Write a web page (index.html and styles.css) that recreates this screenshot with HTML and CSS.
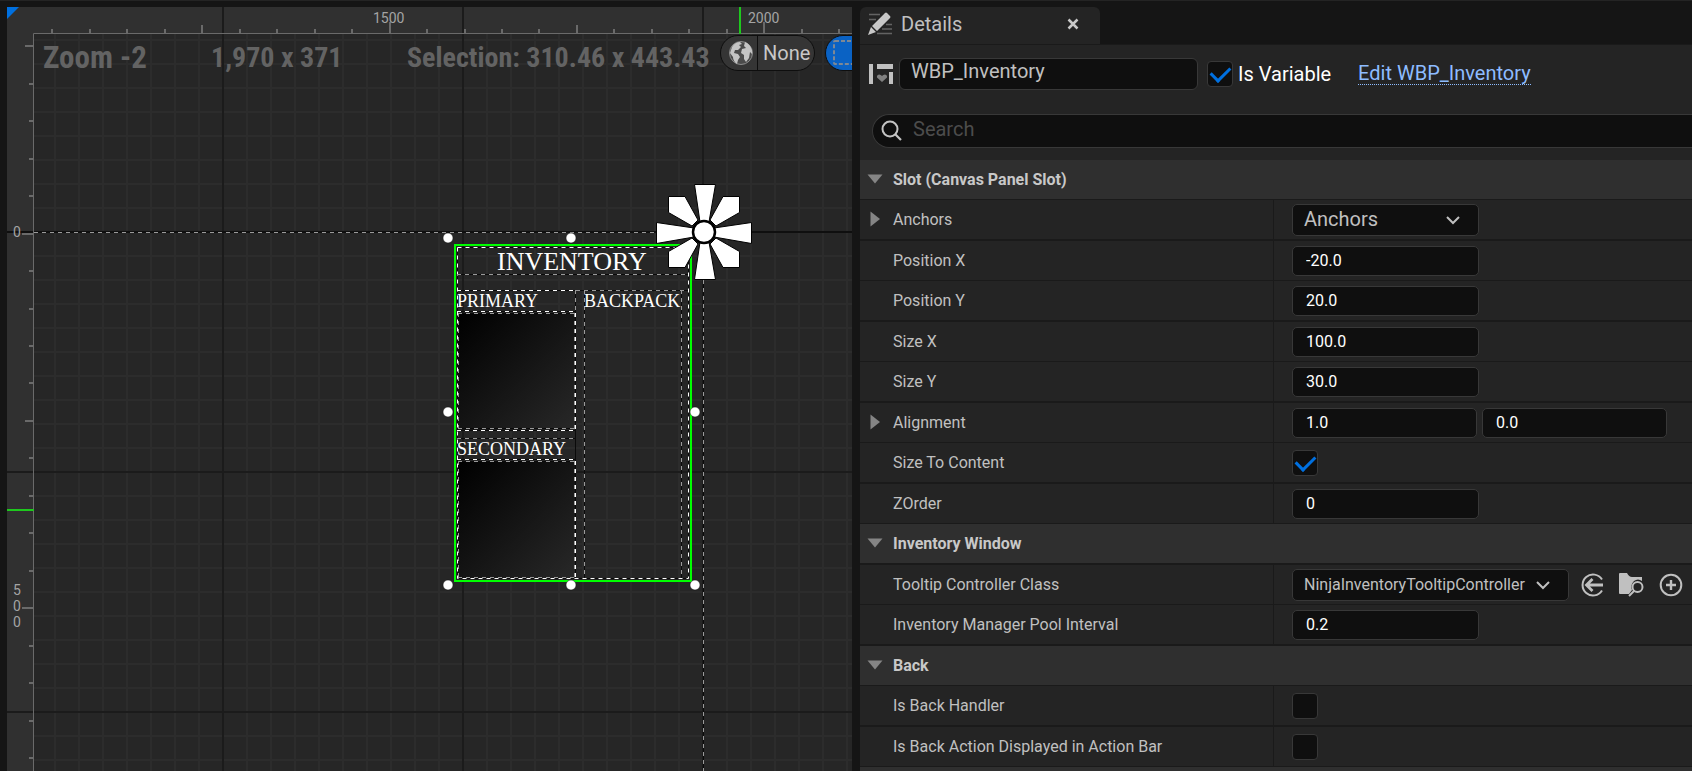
FILE: index.html
```html
<!DOCTYPE html>
<html lang="en">
<head>
<meta charset="utf-8">
<title>Widget Designer</title>
<link rel="stylesheet" href="styles.css">
</head>
<body>
<main class="editor">
  <section class="designer" aria-label="Designer">
    <svg class="scene" aria-hidden="true">
      <defs>
        <pattern id="minor" x="54" y="15" width="24" height="24" patternUnits="userSpaceOnUse">
          <path d="M0 0H24V2H2V24H0Z" fill="#2c2c2c"/>
        </pattern>
        <linearGradient id="slot" x1="0" y1="0" x2="1" y2="1">
          <stop offset="0" stop-color="#000"/><stop offset="1" stop-color="#282828"/>
        </linearGradient>
      </defs>
      <g transform="translate(-7 -7)">
        <rect x="34" y="34" width="4000" height="4000" fill="#262626"/>
        <rect x="34" y="34" width="4000" height="4000" fill="url(#minor)"/>
        <path d="M7 7H4000V33H33V4000H7Z" fill="#303030"/>
        <path d="M7 7H19L7 19Z" fill="#0070e0"/>
        <path d="M223 7V4000M463 7V4000M703 7V4000M7 472H4000M7 712H4000" stroke="#1b1b1b" stroke-width="2"/>
        <path d="M7 232H4000" stroke="#0f0f0f" stroke-width="2"/>
        <path d="M33.500 4000V33.500H4000" fill="none" stroke="#6a6a6a"/>
        <path class="ticks" d="M52 29V33M90 29V33M127 29V33M165 29V33M202 25V33M240 29V33M277 29V33M315 29V33M352 29V33M390 22V33M427 29V33M465 29V33M502 29V33M539 29V33M577 25V33M614 29V33M652 29V33M689 29V33M727 29V33M764 22V33M802 29V33M839 29V33"/>
        <path class="ticks" d="M25 46H33M29 84H33M29 121H33M29 159H33M29 196H33M22 234H33M29 271H33M29 309H33M29 346H33M29 383H33M25 421H33M29 458H33M29 496H33M29 533H33M29 571H33M22 608H33M29 646H33M29 683H33M29 721H33M29 758H33"/>
        <path d="M740 7V34M7 510H34" stroke="#1ec81e" stroke-width="2"/>

        <path class="under" d="M703.500 232V4000"/>
        <path class="dash dim" d="M34 232.500H704M703.500 232V4000"/>

        <rect x="458" y="313" width="117" height="117" fill="url(#slot)"/>
        <rect x="458" y="461" width="117" height="117" fill="url(#slot)"/>
        <path class="under" d="M457.500 247.500H688.500V578.500H457.500ZM457 274.500H688M457 290.500H688M575.500 290V578M584.500 290V578M681.500 290V578M457 311.500H576M458 313.500H575M458 428.500H575M457 430.500H576M457 438.500H575M457 459.500H576M458 461.500H575"/>
        <path class="dash" d="M457.500 247.500H688.500V578.500H457.500ZM457 290.500H576M575.500 313V430M575.500 461V578M457 311.500H576M457 430.500H576M457 459.500H576"/>
        <path class="dash dim" d="M457 274.500H688M576 290.500H688M575.500 290V311M584.500 290V578M681.500 290V578M458 313.500H575M458 428.500H575M457 438.500H575M458 461.500H575M458 577.500H575M458.500 313V430M574.500 313V430M458.500 461V578M574.500 461V578"/>
        <rect x="455" y="245" width="236" height="336" fill="none" stroke="#00ff00" stroke-width="2"/>
        <g fill="#fff" stroke="#111" stroke-opacity=".5">
          <circle cx="448" cy="238" r="5"/><circle cx="571" cy="238" r="5"/>
          <circle cx="448" cy="412" r="5"/><circle cx="695" cy="412" r="5"/>
          <circle cx="448" cy="585" r="5"/><circle cx="571" cy="585" r="5"/><circle cx="695" cy="585" r="5"/>
        </g>
        <g transform="translate(704 232)" fill="#fff" stroke="#000">
          <path d="M-9.500-47.500H11.500L5-10H-4ZM-9.500 47.500H11.500L5 10H-4ZM-47.500-9.500V11.500L-10 5V-4ZM47.500-9.500V11.500L10 5V-4Z"/>
          <path d="M-35.500-35.500H-19L-6-12L-12-6L-35.500-19.500ZM35.500-35.500H19L6-12L12-6L35.500-19.500ZM-35.500 35.500H-19L-6 12L-12 6L-35.500 19.500ZM35.500 35.500H19L6 12L12 6L35.500 19.500Z"/>
          <circle r="11" stroke-width="2.500"/>
        </g>
      </g>
    </svg>
    <span class="mark mark-1500">1500</span>
    <span class="mark mark-2000">2000</span>
    <span class="mark mark-side mark-0">0</span>
    <span class="mark mark-side mark-500">500</span>
    <h2 class="widget-title">INVENTORY</h2>
    <h3 class="widget-label at-primary">PRIMARY</h3>
    <h3 class="widget-label at-backpack">BACKPACK</h3>
    <h3 class="widget-label at-secondary">SECONDARY</h3>

    <div class="hud">
      <span class="hud-zoom">Zoom -2</span>
      <span class="hud-cursor">1,970 x 371</span>
      <span class="hud-selection">Selection: 310.46 x 443.43</span>
      <button class="pill" type="button">
        <svg width="26" height="26" viewBox="0 0 26 26" aria-hidden="true">
          <circle cx="13" cy="13" r="11.500" fill="#4b4b4b" stroke="#8c8c8c"/>
          <path d="M4 7Q7 2 12 2L14 4L11 5L13 7L10 10L7 10L6 13L10 14L12 17L10 20L9 24Q5 21 5 17L2 13ZM17 2Q22 4 24 10L24 14L22 12L21 18L18 22L16 19V15L13 13L14 9L18 8L16 6Z" fill="#c4c4c4"/>
        </svg>
        <span class="pill-text">None</span>
      </button>
      <button class="pill-blue" type="button" aria-label="Show outlines">
        <svg width="26" height="26" viewBox="0 0 26 26" aria-hidden="true"><rect x="1" y="1" width="24" height="23" rx="1" fill="none" stroke="#7e8894" stroke-width="2" stroke-dasharray="4 2"/></svg>
      </button>
    </div>
  </section>

  <section class="details" aria-label="Details">
    <div class="tabs">
      <div class="tab">
        <svg width="24" height="24" viewBox="0 0 24 24" aria-hidden="true">
          <path d="M1 2.500H12M1 7.500H8M18 12.500H24M14 17H24M9 21.500H24" stroke="#636363" stroke-width="1.500"/>
          <path d="M17 1Q18 0 19 1L22 4Q23 5 22 6L9 19L4 14ZM3 15L8 20L0 23Z" fill="#c8c8c8"/>
        </svg>
        <span class="tab-name">Details</span>
        <button class="close" type="button" aria-label="Close"><svg width="12" height="12" viewBox="0 0 12 12"><path d="M1.500 1.500L10.500 10.500M10.500 1.500L1.500 10.500" stroke="#c8c8c8" stroke-width="2.500"/></svg></button>
      </div>
    </div>
    <div class="identity">
      <svg width="24" height="20" viewBox="0 0 24 20" aria-hidden="true">
        <path d="M0 0H4V20H0ZM8 0H24V5H8ZM20 8H24V20H20Z" fill="#c0c0c0"/>
        <path d="M13 18L8 13.500Q7.500 11 10 10.500Q12 10.500 13 12Q14 10.500 16 10.500Q18.500 11 18 13.500Z" fill="#808080"/>
      </svg>
      <input class="name-box" type="text" value="WBP_Inventory" aria-label="Widget name">
      <label class="is-variable"><input class="check" type="checkbox" checked>Is Variable</label>
      <a class="edit" href="#">Edit WBP_Inventory</a>
    </div>
    <div class="search">
      <svg width="22" height="22" viewBox="0 0 22 22" aria-hidden="true"><circle cx="9" cy="9" r="7.500" fill="none" stroke="#c4c4c4" stroke-width="2"/><path d="M14.500 14.500L20 20" stroke="#c4c4c4" stroke-width="2.200"/></svg>
      <input class="search-box" type="search" placeholder="Search" aria-label="Search">
    </div>

    <div class="properties">
      <button class="category" type="button"><svg class="caret" viewBox="0 0 16 16"><path class="tri" d="M0.500 3.500H15.500L8 12.500Z"/></svg>Slot (Canvas Panel Slot)</button>
      <div class="row">
        <div class="key"><svg class="caret" viewBox="0 0 16 16"><path class="tri" d="M3.500 0.500V15.500L13 8Z"/></svg><label for="anchors">Anchors</label></div>
        <div class="value"><span class="combo combo-short"><select id="anchors"><option>Anchors</option></select><svg class="chevron" viewBox="0 0 16 16"><path d="M2 5L8 11L14 5"/></svg></span></div>
      </div>
      <div class="row">
        <div class="key"><label for="px">Position X</label></div>
        <div class="value"><input class="number" id="px" type="text" value="-20.0"></div>
      </div>
      <div class="row">
        <div class="key"><label for="py">Position Y</label></div>
        <div class="value"><input class="number" id="py" type="text" value="20.0"></div>
      </div>
      <div class="row">
        <div class="key"><label for="sx">Size X</label></div>
        <div class="value"><input class="number" id="sx" type="text" value="100.0"></div>
      </div>
      <div class="row">
        <div class="key"><label for="sy">Size Y</label></div>
        <div class="value"><input class="number" id="sy" type="text" value="30.0"></div>
      </div>
      <div class="row">
        <div class="key"><svg class="caret" viewBox="0 0 16 16"><path class="tri" d="M3.500 0.500V15.500L13 8Z"/></svg><label for="ax">Alignment</label></div>
        <div class="value"><input class="number half" id="ax" type="text" value="1.0"><input class="number half" type="text" value="0.0" aria-label="Alignment Y"></div>
      </div>
      <div class="row">
        <div class="key"><label for="stc">Size To Content</label></div>
        <div class="value"><input class="check" id="stc" type="checkbox" checked></div>
      </div>
      <div class="row">
        <div class="key"><label for="zo">ZOrder</label></div>
        <div class="value"><input class="number" id="zo" type="text" value="0"></div>
      </div>
      <button class="category" type="button"><svg class="caret" viewBox="0 0 16 16"><path class="tri" d="M0.500 3.500H15.500L8 12.500Z"/></svg>Inventory Window</button>
      <div class="row">
        <div class="key"><label for="tcc">Tooltip Controller Class</label></div>
        <div class="value">
          <span class="combo combo-class"><select id="tcc"><option>NinjaInventoryTooltipController</option></select><svg class="chevron" viewBox="0 0 16 16"><path d="M2 5L8 11L14 5"/></svg></span>
          <span class="tools">
            <button type="button" aria-label="Use selected"><svg width="24" height="24" viewBox="0 0 24 24"><path d="M22 6.500A10.500 10.500 0 1 0 22 17.500" fill="none" stroke="#c0c0c0" stroke-width="2"/><path d="M23 12H7M12.500 6L6.500 12L12.500 18" fill="none" stroke="#c0c0c0" stroke-width="2.800"/></svg></button>
            <button type="button" aria-label="Browse"><svg width="25" height="24" viewBox="0 0 25 24"><path d="M1 0H8Q10 4 13 4H23V8Q19 5 15 8Q11 12 13 17L10 21H1Q0 21 0 20V1Q0 0 1 0Z" fill="#c0c0c0"/><circle cx="18.500" cy="14" r="5" fill="none" stroke="#c0c0c0" stroke-width="2"/><path d="M15 18L10 23" stroke="#c0c0c0" stroke-width="2"/></svg></button>
            <button type="button" aria-label="Create new"><svg width="24" height="24" viewBox="0 0 24 24"><circle cx="12" cy="12" r="10.300" fill="none" stroke="#c0c0c0" stroke-width="2"/><path d="M12 7V17M7 12H17" stroke="#c0c0c0" stroke-width="2.400"/></svg></button>
          </span>
        </div>
      </div>
      <div class="row">
        <div class="key"><label for="pool">Inventory Manager Pool Interval</label></div>
        <div class="value"><input class="number" id="pool" type="text" value="0.2"></div>
      </div>
      <button class="category" type="button"><svg class="caret" viewBox="0 0 16 16"><path class="tri" d="M0.500 3.500H15.500L8 12.500Z"/></svg>Back</button>
      <div class="row">
        <div class="key"><label for="ibh">Is Back Handler</label></div>
        <div class="value"><input class="check" id="ibh" type="checkbox"></div>
      </div>
      <div class="row">
        <div class="key"><label for="iba">Is Back Action Displayed in Action Bar</label></div>
        <div class="value"><input class="check" id="iba" type="checkbox"></div>
      </div>
      <div class="category"></div>
    </div>
  </section>
</main>
</body>
</html>
```
FILE: styles.css
```css
* { box-sizing: border-box; }

body {
  margin: 0;
  height: 100vh;
  overflow: hidden;
  background: #151515;
  color: #c0c0c0;
  font-family: Roboto, "Liberation Sans", sans-serif;
  font-size: 16px;
}

button, input, select { font: inherit; color: inherit; }
button { border: 0; padding: 0; background: none; }

.editor {
  display: grid;
  grid-template-columns: minmax(0, 845fr) minmax(0, 832fr);
  grid-template-rows: minmax(0, 1fr);
  gap: 8px;
  height: 100%;
  border-top: 1px solid #242424;
  padding: 6px 0 0 7px;
}

/* Designer canvas */
.designer { position: relative; overflow: hidden; background: #262626; }
.scene { position: absolute; inset: 0; width: 100%; height: 100%; }
.ticks { stroke: #6a6a6a; stroke-width: 2; }
.under { fill: none; stroke: #0a0a0a; }
.dash { fill: none; stroke: #fff; stroke-dasharray: 4 4; }
.dim { stroke: #9a9a9a; }

.mark {
  position: absolute;
  font-size: 14px;
  line-height: 16px;
  color: #a4a4a4;
}
.mark-1500 { left: 366px; top: 3px; }
.mark-2000 { left: 741px; top: 3px; }
.mark-side { left: 6px; width: 8px; word-break: break-all; }
.mark-0 { top: 217px; }
.mark-500 { top: 575px; }

.widget-title, .widget-label {
  position: absolute;
  margin: 0;
  font-family: "Liberation Serif", serif;
  font-weight: 400;
  color: #fff;
}
.widget-title { left: 490px; top: 240px; font-size: 26px; line-height: 30px; }
.widget-label { font-size: 18px; line-height: 20px; }
.at-primary { left: 450px; top: 284px; }
.at-backpack { left: 577px; top: 284px; }
.at-secondary { left: 450px; top: 432px; }

.hud {
  position: absolute;
  left: 36px;
  top: 28px;
  display: flex;
  align-items: center;
  height: 36px;
  white-space: nowrap;
  font-family: "Roboto Condensed", Roboto, sans-serif;
  font-weight: 700;
  font-size: 28px;
  color: #636363;
}
.hud-zoom { flex: none; width: 168px; padding-top: 8px; font-size: 31px; }
.hud-cursor { flex: none; width: 196px; padding-top: 8px; }
.hud-selection { flex: none; width: 313px; padding-top: 8px; }

.pill, .pill-blue {
  display: flex;
  flex: none;
  align-items: center;
  height: 36px;
  border: 1px solid #0e0e0e;
  border-radius: 18px;
  background: #353535;
}
.pill { width: 95px; padding-left: 7px; gap: 3px; }
.pill-text {
  align-self: stretch;
  padding-left: 5px;
  border-left: 1px solid #0e0e0e;
  font: 20px/34px Roboto, sans-serif;
  color: #c8c8c8;
}
.pill-blue { width: 90px; margin-left: 10px; padding-left: 7px; background: #0a62c4; }

/* Details panel */
.details { display: flex; flex-direction: column; overflow: hidden; background: #242424; }
.details > * { flex: none; }
.tabs { background: #151515; border-bottom: 1px solid #1a1a1a; }
.tab {
  display: flex;
  align-items: center;
  width: 240px;
  height: 37px;
  padding: 0 21px 4px 8px;
  border-radius: 6px 6px 0 0;
  background: #242424;
  font-size: 20px;
}
.tab-name { flex: 1; padding-left: 9px; }
.close { display: flex; }

.identity {
  display: flex;
  align-items: center;
  height: 57px;
  padding-left: 9px;
  font-size: 20px;
  white-space: nowrap;
}
.name-box {
  flex: none;
  width: 299px;
  height: 32px;
  margin-left: 6px;
  padding: 0 11px 5px;
  border: 1px solid #383838;
  border-radius: 6px;
  background: #0f0f0f;
}
.is-variable { display: flex; align-items: center; gap: 5px; margin-left: 9px; color: #fff; }
.edit {
  margin-left: 27px;
  line-height: 22px;
  color: #8ebcff;
  text-decoration: none;
  border-bottom: 1px dotted #8ebcff;
}

.check {
  appearance: none;
  display: grid;
  place-items: start center;
  flex: none;
  width: 26px;
  height: 26px;
  margin: 0;
  padding-top: 4px;
  border: 1px solid #383838;
  border-radius: 4px;
  background: #0f0f0f;
}
.check:checked::before {
  content: "";
  width: 16px;
  height: 9px;
  border: solid #0070e0;
  border-width: 0 0 3px 3px;
  transform: rotate(-45deg);
}

.search {
  display: flex;
  align-items: center;
  height: 34px;
  margin: 12px 0 12px 12px;
  padding-left: 8px;
  border: 1px solid #383838;
  border-right: 0;
  border-radius: 17px 0 0 17px;
  background: #0f0f0f;
}
.search-box {
  flex: 1;
  padding: 0 0 4px 10px;
  border: 0;
  background: none;
  font-size: 20px;
}
.search-box::placeholder { color: #4c4c4c; }

.category, .row {
  width: 100%;
  height: 40px;
  border-bottom: 1px solid #1a1a1a;
}
.properties > :nth-child(even) { height: 41px; border-bottom-width: 2px; }
.category {
  display: flex;
  align-items: center;
  gap: 10px;
  padding: 0 7px 1px;
  background: #2f2f2f;
  font-weight: 700;
  color: #c8c8c8;
  text-align: left;
}
.row { display: grid; grid-template-columns: minmax(0, 414fr) minmax(0, 418fr); }
.key {
  display: flex;
  align-items: center;
  gap: 10px;
  padding: 0 7px 1px;
  border-right: 1px solid #1a1a1a;
  white-space: nowrap;
}
.key > label:first-child { padding-left: 26px; }
.caret { flex: none; width: 16px; height: 16px; }
.tri { fill: #858585; }
.value { display: flex; align-items: center; gap: 5px; padding-left: 18px; }

.number {
  width: 187px;
  height: 30px;
  padding: 0 13px 1px;
  border: 1px solid #383838;
  border-radius: 5px;
  background: #0f0f0f;
  color: #fff;
}
.half { width: 185px; }
.combo { position: relative; display: block; height: 32px; }
.combo-short { width: 187px; font-size: 20px; }
.combo-class { width: 277px; }
.combo select {
  appearance: none;
  width: 100%;
  height: 100%;
  padding: 0 11px 1px;
  border: 1px solid #383838;
  border-radius: 5px;
  background: #0f0f0f;
}
.chevron {
  position: absolute;
  right: 18px;
  top: 8px;
  width: 16px;
  height: 16px;
  fill: none;
  stroke: #c0c0c0;
  stroke-width: 2;
  pointer-events: none;
}
.tools { display: flex; gap: 15px; padding-left: 6px; }
.tools button { display: flex; }
```
